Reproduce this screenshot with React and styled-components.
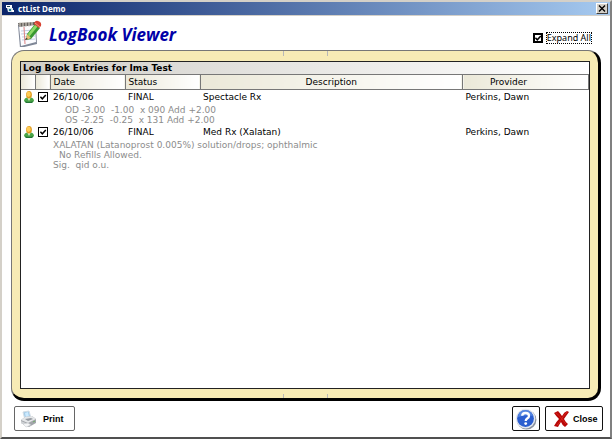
import React, { useState } from "react";
import styled, { createGlobalStyle } from "styled-components";

const GlobalStyle = createGlobalStyle`
  *, *::before, *::after { box-sizing: border-box; }
  body { margin: 0; background: #fff; font-family: "DejaVu Sans", Verdana, sans-serif; font-size: 9px; color: #000; }
  button, input { font: inherit; color: inherit; margin: 0; }
`;

const Window = styled.main`
  min-height: 100vh;
  display: flex;
  flex-direction: column;
  background: #fff;
  border: 2px solid #d4d0c8;
  border-right-color: #808080;
  border-bottom: 2px solid #505050;
`;

const TitleBar = styled.header`
  display: flex;
  align-items: center;
  gap: 3px;
  height: 14px;
  padding: 0 2px 0 4px;
  color: #fff;
  background: linear-gradient(90deg, #0a246a, #a6caf0);
  border-bottom: 1px solid #d4d0c8;
`;

const WindowTitle = styled.span`
  flex: 1;
  font: bold 8px/12px "Noto Sans", Tahoma, sans-serif;
`;

const CaptionButton = styled.button`
  display: flex;
  align-items: center;
  justify-content: center;
  width: 12px;
  height: 11px;
  padding: 0;
  background: #d4d0c8;
  border: 1px solid;
  border-color: #fff #404040 #404040 #fff;
`;

const Banner = styled.div`
  display: flex;
  align-items: center;
  height: 34px;
  padding: 0 19px 0 14px;
`;

const Heading = styled.h1`
  flex: 1;
  margin: 0;
  padding: 4px 0 0 5px;
  font: italic bold 17px/24px "Open Sans", "Noto Sans", sans-serif;
  color: #0000a8;
`;

const Check = styled.input`
  appearance: none;
  flex: none;
  display: block;
  width: 10px;
  height: 10px;
  border: ${(p) => (p.$heavy ? 2 : 1)}px solid #000;
  background: #fff;
  &:checked {
    background: #fff
      url("data:image/svg+xml,%3Csvg xmlns='http://www.w3.org/2000/svg' viewBox='0 0 8 8'%3E%3Cpath d='M1.4 3.8l1.9 2L6.8 2' fill='none' stroke='%23000' stroke-width='1.5'/%3E%3C/svg%3E")
      center / 8px 8px no-repeat;
  }
`;

const ExpandLabel = styled.label`
  display: flex;
  align-items: center;
  gap: 4px;
  padding-top: 10px;
`;

const FocusText = styled.span`
  font: 9px/10px "Noto Sans", Tahoma, sans-serif;
  outline: 1px dotted #000;
`;

const Frame = styled.section`
  flex: 1;
  display: flex;
  flex-direction: column;
  margin: 0 9px 0 9px;
  border: 1px solid #777;
  border-right: 3px solid #000;
  border-bottom: 3px solid #000;
  border-radius: 13px;
  background: #f7ebb5;
`;

const Ticks = styled.div`
  width: 45px;
  height: ${(p) => p.$height}px;
  margin: ${(p) => (p.$atEnd ? "5px auto 0" : "0 auto 5px")};
  border: solid #b8b8b8;
  border-width: 0 1px;
`;

const Panel = styled.div`
  flex: 1;
  margin: 0 8px;
  background: #fff;
  border: 1px solid #222;
`;

const PanelTitle = styled.h2`
  margin: 0;
  padding: 1px 2px 0;
  height: 12px;
  font-size: 9px;
  line-height: 11px;
  background: linear-gradient(90deg, #d0cec8, #fff);
`;

const Grid = styled.table`
  width: 100%;
  table-layout: fixed;
  border-collapse: collapse;
`;

const Column = styled.col`
  width: ${(p) => (p.$width ? `${p.$width}px` : "auto")};
`;

const HeadCell = styled.th`
  height: 15px;
  padding: 0 3px;
  font-weight: normal;
  line-height: 12px;
  text-align: ${(p) => p.$align || "left"};
  background: linear-gradient(90deg, #ebe8d8, #fff);
  border: 1px solid #777;
  &:first-child { border-left: 0; }
`;

const ProviderHead = styled(HeadCell)`
  padding-right: 37px;
  text-align: center;
`;

const Cell = styled.td`
  height: 14px;
  padding: 0 0 0 3px;
  line-height: 12px;
  vertical-align: middle;
  white-space: nowrap;
  svg { display: block; }
`;

const DetailCell = styled.td`
  padding: 1px 3px ${(p) => p.$bottom}px;
  color: #8c8c8c;
  line-height: 10px;
  white-space: pre-wrap;
`;

const DetailLine = styled.div`
  padding-left: ${(p) => p.$indent}px;
`;

const Footer = styled.footer`
  display: flex;
  gap: 5px;
  padding: 5px 7px 6px 12px;
`;

const Spacer = styled.div`
  flex: 1;
`;

const Button = styled.button`
  display: flex;
  align-items: center;
  gap: ${(p) => p.$gap || 0}px;
  width: ${(p) => p.$width}px;
  height: 25px;
  padding: 0 ${(p) => p.$pad}px;
  font: bold 9px/12px "Liberation Sans", Arial, sans-serif;
  background: #fff;
  border: 1px solid ${(p) => (p.$soft ? "#666" : "#111")};
  border-radius: 2px;
  svg { flex: none; }
`;

const AppIcon = () => (
  <svg width="9" height="9" viewBox="0 0 9 9" aria-hidden="true">
    <path d="M0 1h6v3H0z" fill="#fff" />
    <path d="M1 4h6v4H2z" fill="#d8e4ec" />
    <path d="M1 2h3v1H1z" fill="#245" />
    <path d="M3 5h2v2H3z" fill="#1b8090" />
    <path d="M6 6h2v2H6z" fill="#fff" />
  </svg>
);

const NotebookIcon = () => (
  <svg width="28" height="28" viewBox="0 0 28 28" aria-hidden="true">
    <path d="M2 6l18-1 1 20-17 4z" fill="#7f8797" />
    <path d="M3 7l16-1 1 17-15 4z" fill="#fbfcff" />
    <path d="M5 12l13-1M5 15l13-1M6 18l13-1M6 21l13-1" stroke="#c3d0e3" />
    <path d="M8 8l1 17" stroke="#dc8282" />
    <path d="M2 4l17-1v3L3 8z" fill="#66625e" />
    <path d="M4 3v5m3-5v5m3-5v5m3-5v5m3-5v4" stroke="#ded9d0" />
    <path d="M11 15L19 5l5 4-9 11-5 1z" fill="#389830" />
    <path d="M12 15l7-9 3 1-9 11z" fill="#8edb68" />
    <path d="M11 15l4 4-5 2z" fill="#e9bd73" />
    <path d="M10 19l-1 2 3-1z" fill="#222" />
    <path d="M18 5q1-4 4-3 4 1 3 5l-2 2z" fill="#d84232" />
    <path d="M19 4l5 4" stroke="#f39b7e" />
  </svg>
);

const PersonIcon = () => (
  <svg width="10" height="12" viewBox="0 0 10 12" aria-hidden="true">
    <path d="M0 10Q0 7 4 6h2q4 1 4 4l-2 2H2z" fill="#4aa548" />
    <path d="M3 6l2 4 2-4z" fill="#e4f3cf" />
    <path d="M1 10q4 2 8 0l-1 2H2z" fill="#247637" />
    <ellipse cx="5" cy="3.8" rx="2.9" ry="3.8" fill="#e09a20" />
    <ellipse cx="4.6" cy="3.3" rx="2" ry="2.7" fill="#ffcc55" />
  </svg>
);

const PrinterIcon = () => (
  <svg width="18" height="18" viewBox="0 0 18 18" aria-hidden="true">
    <path d="M3 2l6-1 2 7-6 2z" fill="#a3cce8" stroke="#d3dde6" />
    <path d="M5 3l3-1 1 5-3 1z" fill="#cceaff" />
    <path d="M1 10l4-3 7-1 4 3v4l-7 4-8-4z" fill="#a2a5aa" />
    <path d="M1 10l4-3 7-1 4 3-8 4z" fill="#e5e7e9" />
    <path d="M1 11l7 3v3l-7-4z" fill="#d0d3d6" />
    <path d="M5 9l6-1 2 1-5 2z" fill="#959aa1" />
    <path d="M3 14l5-1 3 2-5 2z" fill="#f5f6f7" stroke="#c2c6ca" strokeWidth=".5" />
    <path d="M13 12l2-1" stroke="#6fae67" />
  </svg>
);

const HelpIcon = () => (
  <svg width="22" height="22" viewBox="0 0 22 22" aria-hidden="true">
    <circle cx="11.6" cy="11.8" r="9.8" fill="#8b929d" />
    <circle cx="10.6" cy="10.6" r="9.8" fill="#e4e8f0" />
    <circle cx="10.5" cy="10.5" r="8.4" fill="#2c5fd0" />
    <path d="M3 9q0-6 7-7 6 0 8 6-6-2-15 1z" fill="#6c9be9" opacity=".65" />
    <path d="M7.2 7.8Q7.3 5 10.5 5q3.5 0 3.5 2.9 0 1.4-1.8 2.6-1.5 1-1.5 2.4" fill="none" stroke="#fff" strokeWidth="2.3" />
    <circle cx="10.7" cy="15.6" r="1.4" fill="#fff" />
  </svg>
);

const CrossIcon = () => (
  <svg width="17" height="18" viewBox="0 0 17 18" aria-hidden="true">
    <path d="M1 3l4-2q2 2 4 5 2-4 5-5l2 1q-3 4-5 7 2 4 4 5l-3 3q-3-2-4-5-2 3-3 5l-4-1q2-4 5-7Q3 6 1 3z" fill="#b80808" />
    <path d="M3 3q4 3 6 6t4 5M14 2q-4 4-6 8t-4 5" fill="none" stroke="#d8251c" />
  </svg>
);

const columns = [14, 15, 75, 75, null, 126];

const entries = [
  {
    date: "26/10/06", status: "FINAL", description: "Spectacle Rx", provider: "Perkins, Dawn",
    bottom: 0,
    details: [
      [12, "OD -3.00  -1.00  x 090 Add +2.00"],
      [12, "OS -2.25  -0.25  x 131 Add +2.00"],
    ],
  },
  {
    date: "26/10/06", status: "FINAL", description: "Med Rx (Xalatan)", provider: "Perkins, Dawn",
    bottom: 4,
    details: [
      [0, "XALATAN (Latanoprost 0.005%) solution/drops; ophthalmic"],
      [6, "No Refills Allowed."],
      [0, "Sig.  qid o.u."],
    ],
  },
];

function Entry({ entry, expanded }) {
  const [checked, setChecked] = useState(true);
  return (
    <>
      <tr>
        <Cell><PersonIcon /></Cell>
        <Cell>
          <Check type="checkbox" aria-label={entry.description} checked={checked} onChange={() => setChecked(!checked)} />
        </Cell>
        <Cell>{entry.date}</Cell>
        <Cell>{entry.status}</Cell>
        <Cell>{entry.description}</Cell>
        <Cell>{entry.provider}</Cell>
      </tr>
      {expanded && (
        <tr>
          <td colSpan={2} />
          <DetailCell colSpan={4} $bottom={entry.bottom}>
            {entry.details.map(([indent, text]) => (
              <DetailLine key={text} $indent={indent}>{text}</DetailLine>
            ))}
          </DetailCell>
        </tr>
      )}
    </>
  );
}

export default function App() {
  const [expanded, setExpanded] = useState(true);
  return (
    <Window>
      <GlobalStyle />
      <TitleBar>
        <AppIcon />
        <WindowTitle>ctList Demo</WindowTitle>
        <CaptionButton aria-label="Close window">
          <svg width="8" height="7" viewBox="0 0 8 7" aria-hidden="true">
            <path d="M1 .5l6 6M7 .5l-6 6" stroke="#000" strokeWidth="1.4" />
          </svg>
        </CaptionButton>
      </TitleBar>
      <Banner>
        <NotebookIcon />
        <Heading>LogBook Viewer</Heading>
        <ExpandLabel>
          <Check $heavy type="checkbox" checked={expanded} onChange={() => setExpanded(!expanded)} />
          <FocusText>Expand All</FocusText>
        </ExpandLabel>
      </Banner>
      <Frame>
        <Ticks $height={5} />
        <Panel>
          <PanelTitle>Log Book Entries for Ima Test</PanelTitle>
          <Grid>
            <colgroup>
              {columns.map((width, i) => <Column key={i} $width={width} />)}
            </colgroup>
            <thead>
              <tr>
                <HeadCell />
                <HeadCell />
                <HeadCell>Date</HeadCell>
                <HeadCell>Status</HeadCell>
                <HeadCell $align="center">Description</HeadCell>
                <ProviderHead>Provider</ProviderHead>
              </tr>
            </thead>
            <tbody>
              {entries.map((entry) => <Entry key={entry.description} entry={entry} expanded={expanded} />)}
            </tbody>
          </Grid>
        </Panel>
        <Ticks $atEnd $height={4} />
      </Frame>
      <Footer>
        <Button $soft $width={61} $pad={5} $gap={5}><PrinterIcon />Print</Button>
        <Spacer />
        <Button $width={28} $pad={2} aria-label="Help"><HelpIcon /></Button>
        <Button $width={58} $pad={7} $gap={3}><CrossIcon />Close</Button>
      </Footer>
    </Window>
  );
}
